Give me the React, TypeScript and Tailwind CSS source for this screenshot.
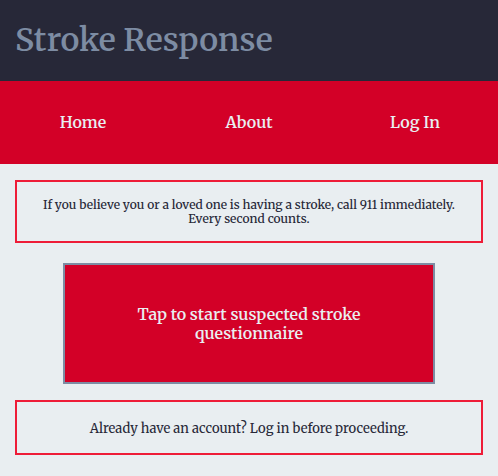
const links = ["Home", "About", "Log In"];

export default function App() {
  return (
    <div className="min-h-screen bg-[#e9eef1] text-[#272838] font-['Merriweather','Noto_Serif','DejaVu_Serif','Liberation_Serif',serif]">
      <header className="bg-[#272838] px-[15px] py-4">
        <h1 className="text-[32px] leading-[49px] font-semibold text-[#7d8ca3]">Stroke Response</h1>
      </header>
      <nav className="flex h-[83px] items-center bg-[#d30027] pb-0.5 text-[#e9eef1]">
        {links.map((label) => (
          <a key={label} href="#" className="flex-1 text-center text-base font-semibold">
            {label}
          </a>
        ))}
      </nav>
      <main className="flex flex-col px-[15px] py-4 text-center">
        <p className="border-2 border-[#ee1c38] px-3 pt-4 pb-[15px] text-xs leading-[14px] font-medium">
          If you believe you or a loved one is having a stroke, call 911 immediately.{" "}
          Every second counts.
        </p>
        <button
          type="button"
          className="mx-12 mt-5 mb-4 border-2 border-[#7d8ca3] bg-[#d30027] px-12 pt-10 pb-[39px] text-base leading-[19px] font-semibold text-[#e9eef1]"
        >
          Tap to start suspected stroke questionnaire
        </button>
        <p className="border-2 border-[#ee1c38] px-3 pt-5 pb-[17px] text-[13px] leading-[14px]">
          Already have an account? Log in before proceeding.
        </p>
      </main>
    </div>
  );
}
